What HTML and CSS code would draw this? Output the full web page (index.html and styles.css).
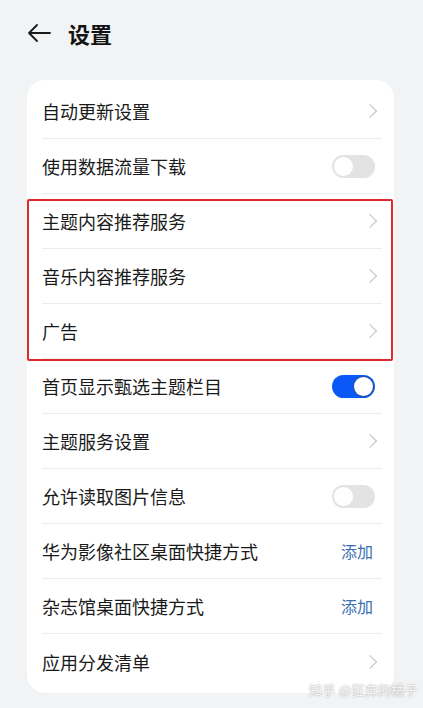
FILE: index.html
```html
<!DOCTYPE html>
<html lang="zh">
<head>
<meta charset="utf-8">
<link rel="stylesheet" href="styles.css">
</head>
<body>
<div class="page">
  <header class="top">
    <svg class="back" width="24" height="20" viewBox="0 0 24 20"><path d="M23 10H2M10 2L2 10l8 8" fill="none" stroke="#1a1a1a" stroke-width="1.8" stroke-linecap="round" stroke-linejoin="round"/></svg>
    <h1 class="title">设置</h1>
  </header>
  <div class="card">
    <div class="row"><span class="label">自动更新设置</span><span class="chev"></span></div>
    <div class="row"><span class="label">使用数据流量下载</span><span class="toggle"></span></div>
    <div class="group">
      <div class="row"><span class="label">主题内容推荐服务</span><span class="chev"></span></div>
      <div class="row"><span class="label">音乐内容推荐服务</span><span class="chev"></span></div>
      <div class="row"><span class="label">广告</span><span class="chev"></span></div>
    </div>
    <div class="row"><span class="label">首页显示甄选主题栏目</span><span class="toggle on"></span></div>
    <div class="row"><span class="label">主题服务设置</span><span class="chev"></span></div>
    <div class="row"><span class="label">允许读取图片信息</span><span class="toggle"></span></div>
    <div class="row"><span class="label">华为影像社区桌面快捷方式</span><span class="add">添加</span></div>
    <div class="row"><span class="label">杂志馆桌面快捷方式</span><span class="add">添加</span></div>
    <div class="row last"><span class="label">应用分发清单</span><span class="chev"></span></div>
  </div>
  <div class="watermark">知乎 @狂奔的橘子</div>
</div>
</body>
</html>
```
FILE: styles.css
```css
* { box-sizing: border-box; }
html, body { margin: 0; padding: 0; }
body {
  background: #f1f3f5;
  font-family: "Noto Sans CJK SC", "Noto Sans", sans-serif;
  color: #1a1a1a;
  width: 423px;
  height: 708px;
  overflow: hidden;
}
.page { position: relative; height: 708px; }
.top {
  display: flex;
  align-items: center;
  height: 66px;
  padding-left: 27px;
  gap: 17px;
}
.back { display: block; }
.title {
  margin: 0;
  font-size: 22px;
  font-weight: 700;
  line-height: 1;
  color: #141414;
}
.card {
  margin: 14px 29px 0 27px;
  background: #fff;
  border-radius: 18px;
  padding: 4px 0;
}
.group { position: relative; }
.group::after {
  content: "";
  position: absolute;
  left: 0;
  right: 1px;
  top: 5px;
  bottom: -2px;
  border: 2px solid #dc2a2e;
  border-radius: 2px;
  pointer-events: none;
}
.row {
  height: 55px;
  margin: 0 12px 0 15px;
  padding-right: 5px;
  display: flex;
  align-items: center;
  justify-content: space-between;
  border-bottom: 1px solid #ededed;
}
.row.last { border-bottom: none; }
.label {
  font-size: 18px;
  line-height: 1;
  color: #1a1a1a;
}
.chev {
  width: 10px;
  height: 10px;
  border-top: 1.6px solid #c2c2c2;
  border-right: 1.6px solid #c2c2c2;
  transform: rotate(45deg);
  margin-right: 2px;
}
.toggle {
  position: relative;
  width: 43px;
  height: 23px;
  border-radius: 12px;
  background: #e3e3e3;
  margin-right: 2px;
}
.toggle::after {
  content: "";
  position: absolute;
  left: 2px;
  top: 2px;
  width: 19px;
  height: 19px;
  border-radius: 50%;
  background: #fff;
}
.toggle.on { background: #0a59f7; }
.toggle.on::after {
  left: auto;
  right: 2px;
  box-shadow: 0 0 0 1px #2a4fa0;
}
.add {
  font-size: 16px;
  color: #3a6fb3;
  line-height: 1;
  margin-right: 4px;
}
.watermark {
  position: absolute;
  left: 309px;
  top: 680px;
  font-size: 13px;
  color: #f4f4f4;
  text-shadow: 0 0 2px #9a9a9a;
  letter-spacing: 0.3px;
}
```
